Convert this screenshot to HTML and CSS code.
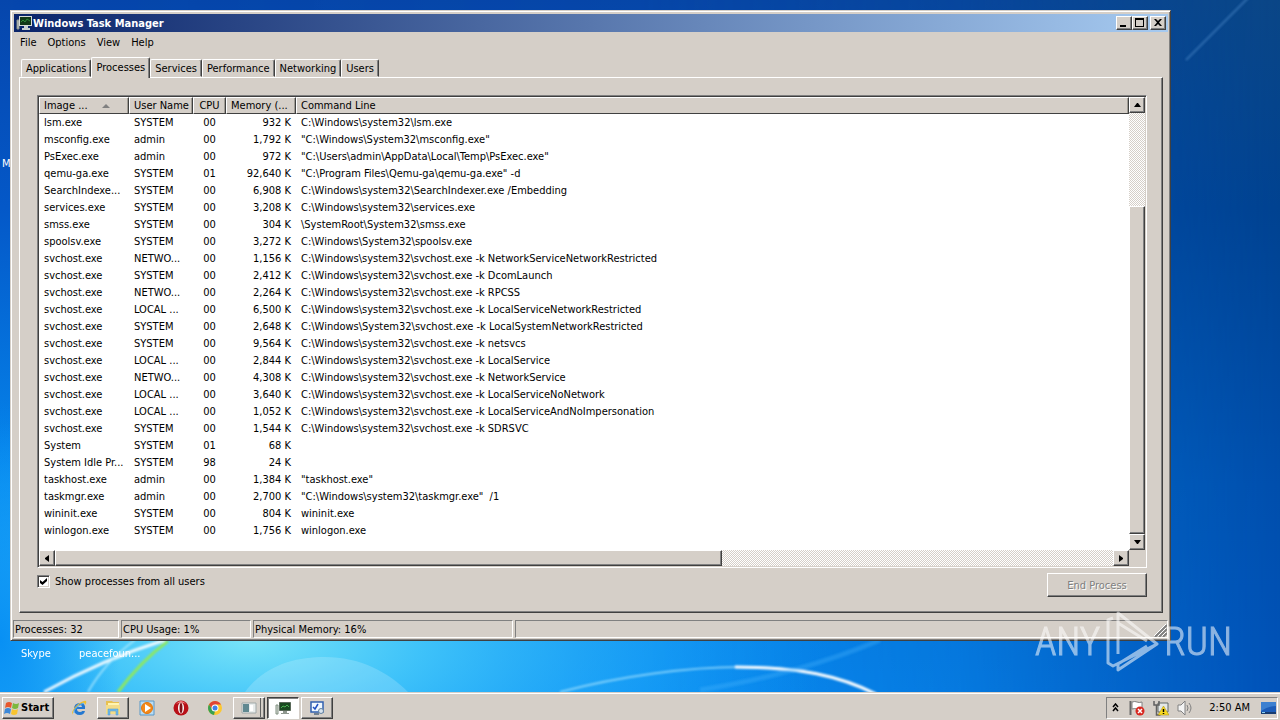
FILE: index.html
```html
<!DOCTYPE html>
<html lang="en">
<head>
    <meta charset="UTF-8">
    <meta name="viewport" content="width=device-width, initial-scale=1.0">
    <title>Windows Task Manager</title>
    <link rel="stylesheet" href="styles.css">
</head>
<body>
    <main class="desktop">
        <svg class="wallpaper" viewBox="0 0 1280 692" preserveAspectRatio="none" aria-hidden="true">
            <defs>
                <linearGradient id="sky" x1="0" y1="0" x2="0" y2="1">
                    <stop offset="0" stop-color="#0646ac"/>
                    <stop offset="0.3" stop-color="#0458c8"/>
                    <stop offset="0.7" stop-color="#0588ee"/>
                    <stop offset="1" stop-color="#0a94fa"/>
                </linearGradient>
                <linearGradient id="right" x1="0" y1="0" x2="0" y2="1">
                    <stop offset="0" stop-color="#0a4686"/>
                    <stop offset="0.3" stop-color="#004290"/>
                    <stop offset="0.7" stop-color="#004eac"/>
                    <stop offset="1" stop-color="#0052b8"/>
                </linearGradient>
                <linearGradient id="fade" x1="0" y1="0" x2="1" y2="0">
                    <stop offset="0" stop-color="#fff" stop-opacity="0"/>
                    <stop offset="0.5" stop-color="#fff" stop-opacity="0.1"/>
                    <stop offset="0.75" stop-color="#fff" stop-opacity="0.4"/>
                    <stop offset="0.91" stop-color="#fff" stop-opacity="0.8"/>
                    <stop offset="1" stop-color="#fff"/>
                </linearGradient>
                <mask id="rightmask"><rect width="1280" height="692" fill="url(#fade)"/></mask>
                <radialGradient id="glow" gradientUnits="userSpaceOnUse" cx="0" cy="0" r="1" gradientTransform="translate(250 640) scale(580 240)">
                    <stop offset="0" stop-color="#78e4f8"/>
                    <stop offset="0.3" stop-color="#44c8fa" stop-opacity="0.9"/>
                    <stop offset="1" stop-color="#18a4fa" stop-opacity="0"/>
                </radialGradient>
                <radialGradient id="edge" gradientUnits="userSpaceOnUse" cx="0" cy="0" r="1" gradientTransform="translate(0 640) scale(120 240)">
                    <stop offset="0" stop-color="#0890f4"/>
                    <stop offset="1" stop-color="#0890f4" stop-opacity="0"/>
                </radialGradient>
                <filter id="soft"><feGaussianBlur stdDeviation="1"/></filter>
            </defs>
            <rect width="1280" height="692" fill="url(#sky)"/>
            <rect width="1280" height="692" fill="url(#right)" mask="url(#rightmask)"/>
            <rect width="1280" height="692" fill="url(#glow)"/>
            <rect width="1280" height="692" fill="url(#edge)"/>
            <path d="M245 692C265 665 295 657 325 657C360 657 388 672 408 692Z" fill="#fff" opacity="0.18"/>
            <g fill="none" filter="url(#soft)">
                <path d="M44 692C80 672 120 654 165 640" stroke="#fff" stroke-width="3" opacity="0.9"/>
                <path d="M88 692Q105 662 135 640" stroke="#b8eeff" stroke-width="2" opacity="0.7"/>
                <path d="M118 692Q140 662 168 641" stroke="#8ee860" stroke-width="3"/>
                <path d="M560 692C620 676 690 667 740 667C800 667 840 676 874 694" stroke="#a8e4ff" stroke-width="2" opacity="0.7"/>
                <path d="M735 667C800 667 840 676 876 694" stroke="#fff" stroke-width="3"/>
                <path d="M700 690Q800 674 880 640" stroke="#50b8ff" stroke-width="5" opacity="0.3"/>
                <path d="M1186 60L1250 -4" stroke="#4a86c4" stroke-width="2" opacity="0.6"/>
            </g>
        </svg>

        <span class="desk-label label-m">M</span>
        <span class="desk-label label-skype">Skype</span>
        <span class="desk-label label-peace">peacefoun...</span>

        <section class="window">
            <header class="titlebar">
                <svg class="title-icon" viewBox="0 0 16 16" aria-hidden="true">
                    <path d="M1 5h2v9H1z" fill="#c8ccc8" stroke="#889088" stroke-width="1"/>
                    <rect x="3.500" y="1.500" width="12" height="9" fill="#123818" stroke="#d8dcd8"/>
                    <path d="M5 7l2-2 2 2 2-3 3 2" fill="none" stroke="#2c8838"/>
                    <path d="M8 11h4v2h2v2H6v-2h2z" fill="#c8d0d0"/>
                </svg>
                <h1>Windows Task Manager</h1>
                <div class="title-buttons">
                    <button type="button" class="raised" aria-label="Minimize"><svg viewBox="0 0 12 10"><path d="M2 7h6v2H2z"/></svg></button>
                    <button type="button" class="raised" aria-label="Maximize"><svg viewBox="0 0 12 10"><path d="M1 0h9v9H1zM2 2v6h7V2z" fill-rule="evenodd"/></svg></button>
                    <button type="button" class="raised close" aria-label="Close"><svg viewBox="0 0 12 10"><path d="M2 1h2l2 2 2-2h2L7 4.500 10 8H8L6 6 4 8H2l3-3.500z"/></svg></button>
                </div>
            </header>

            <nav class="menu">
                <button type="button">File</button>
                <button type="button">Options</button>
                <button type="button">View</button>
                <button type="button">Help</button>
            </nav>

            <div class="content">
                <div class="tabs" role="tablist">
                    <button type="button" role="tab">Applications</button>
                    <button type="button" role="tab" class="active" aria-selected="true">Processes</button>
                    <button type="button" role="tab">Services</button>
                    <button type="button" role="tab">Performance</button>
                    <button type="button" role="tab">Networking</button>
                    <button type="button" role="tab">Users</button>
                </div>

                <div class="panel">
                    <div class="list">
                        <div class="list-view">
                            <table>
                                <colgroup>
                                    <col class="col-name">
                                    <col class="col-user">
                                    <col class="col-cpu">
                                    <col class="col-mem">
                                    <col>
                                </colgroup>
                                <thead>
                                    <tr><th>Image ...<span class="sort"></span></th><th>User Name</th><th class="cpu">CPU</th><th>Memory (...</th><th>Command Line</th></tr>
                                </thead>
                                <tbody>
                                    <tr><td>lsm.exe</td><td>SYSTEM</td><td>00</td><td>932 K</td><td>C:\Windows\system32\lsm.exe</td></tr>
                                    <tr><td>msconfig.exe</td><td>admin</td><td>00</td><td>1,792 K</td><td>"C:\Windows\System32\msconfig.exe"</td></tr>
                                    <tr><td>PsExec.exe</td><td>admin</td><td>00</td><td>972 K</td><td>"C:\Users\admin\AppData\Local\Temp\PsExec.exe"</td></tr>
                                    <tr><td>qemu-ga.exe</td><td>SYSTEM</td><td>01</td><td>92,640 K</td><td>"C:\Program Files\Qemu-ga\qemu-ga.exe" -d</td></tr>
                                    <tr><td>SearchIndexe...</td><td>SYSTEM</td><td>00</td><td>6,908 K</td><td>C:\Windows\system32\SearchIndexer.exe /Embedding</td></tr>
                                    <tr><td>services.exe</td><td>SYSTEM</td><td>00</td><td>3,208 K</td><td>C:\Windows\system32\services.exe</td></tr>
                                    <tr><td>smss.exe</td><td>SYSTEM</td><td>00</td><td>304 K</td><td>\SystemRoot\System32\smss.exe</td></tr>
                                    <tr><td>spoolsv.exe</td><td>SYSTEM</td><td>00</td><td>3,272 K</td><td>C:\Windows\System32\spoolsv.exe</td></tr>
                                    <tr><td>svchost.exe</td><td>NETWO...</td><td>00</td><td>1,156 K</td><td>C:\Windows\system32\svchost.exe -k NetworkServiceNetworkRestricted</td></tr>
                                    <tr><td>svchost.exe</td><td>SYSTEM</td><td>00</td><td>2,412 K</td><td>C:\Windows\system32\svchost.exe -k DcomLaunch</td></tr>
                                    <tr><td>svchost.exe</td><td>NETWO...</td><td>00</td><td>2,264 K</td><td>C:\Windows\system32\svchost.exe -k RPCSS</td></tr>
                                    <tr><td>svchost.exe</td><td>LOCAL ...</td><td>00</td><td>6,500 K</td><td>C:\Windows\system32\svchost.exe -k LocalServiceNetworkRestricted</td></tr>
                                    <tr><td>svchost.exe</td><td>SYSTEM</td><td>00</td><td>2,648 K</td><td>C:\Windows\System32\svchost.exe -k LocalSystemNetworkRestricted</td></tr>
                                    <tr><td>svchost.exe</td><td>SYSTEM</td><td>00</td><td>9,564 K</td><td>C:\Windows\system32\svchost.exe -k netsvcs</td></tr>
                                    <tr><td>svchost.exe</td><td>LOCAL ...</td><td>00</td><td>2,844 K</td><td>C:\Windows\system32\svchost.exe -k LocalService</td></tr>
                                    <tr><td>svchost.exe</td><td>NETWO...</td><td>00</td><td>4,308 K</td><td>C:\Windows\system32\svchost.exe -k NetworkService</td></tr>
                                    <tr><td>svchost.exe</td><td>LOCAL ...</td><td>00</td><td>3,640 K</td><td>C:\Windows\system32\svchost.exe -k LocalServiceNoNetwork</td></tr>
                                    <tr><td>svchost.exe</td><td>LOCAL ...</td><td>00</td><td>1,052 K</td><td>C:\Windows\system32\svchost.exe -k LocalServiceAndNoImpersonation</td></tr>
                                    <tr><td>svchost.exe</td><td>SYSTEM</td><td>00</td><td>1,544 K</td><td>C:\Windows\system32\svchost.exe -k SDRSVC</td></tr>
                                    <tr><td>System</td><td>SYSTEM</td><td>01</td><td>68 K</td><td></td></tr>
                                    <tr><td>System Idle Pr...</td><td>SYSTEM</td><td>98</td><td>24 K</td><td></td></tr>
                                    <tr><td>taskhost.exe</td><td>admin</td><td>00</td><td>1,384 K</td><td>"taskhost.exe"</td></tr>
                                    <tr><td>taskmgr.exe</td><td>admin</td><td>00</td><td>2,700 K</td><td>"C:\Windows\system32\taskmgr.exe"&nbsp; /1</td></tr>
                                    <tr><td>wininit.exe</td><td>SYSTEM</td><td>00</td><td>804 K</td><td>wininit.exe</td></tr>
                                    <tr><td>winlogon.exe</td><td>SYSTEM</td><td>00</td><td>1,756 K</td><td>winlogon.exe</td></tr>
                                </tbody>
                            </table>
                        </div>
                        <div class="scroll vertical">
                            <button type="button" class="raised" aria-label="Scroll up"><svg viewBox="0 0 7 4"><path d="M3 0h1l3 4H0z"/></svg></button>
                            <div class="track"><div class="thumb raised"></div></div>
                            <button type="button" class="raised" aria-label="Scroll down"><svg viewBox="0 0 7 4"><path d="M0 0h7L4 4H3z"/></svg></button>
                        </div>
                        <div class="scroll horizontal">
                            <button type="button" class="raised" aria-label="Scroll left"><svg viewBox="0 0 4 7"><path d="M4 0v7L0 4V3z"/></svg></button>
                            <div class="track"><div class="thumb raised"></div></div>
                            <button type="button" class="raised" aria-label="Scroll right"><svg viewBox="0 0 4 7"><path d="M0 0v7l4-3V3z"/></svg></button>
                        </div>
                    </div>
                    <div class="panel-foot">
                        <label><input type="checkbox" checked> Show processes from all users</label>
                        <button type="button" class="end raised" disabled>End Process</button>
                    </div>
                </div>
            </div>

            <footer class="status">
                <span class="st-proc">Processes: 32</span>
                <span class="st-cpu">CPU Usage: 1%</span>
                <span class="st-mem">Physical Memory: 16%</span>
                <span class="st-rest"><svg class="grip" viewBox="0 0 13 13" aria-hidden="true"><path d="M1 13L13 1M5 13l8-8M9 13l4-4" stroke="#808080" stroke-width="2"/><path d="M0 12L12 0M4 12l8-8M8 12l4-4" stroke="#fff"/></svg></span>
            </footer>
        </section>

        <div class="watermark">
            <span>ANY</span>
            <svg viewBox="0 0 56 64" aria-hidden="true">
                <path d="M9 8L4 10V53L9 56L53 34M14 44V3L53 34L14 60V54L43 36M14 13L43 31" fill="none" stroke="#fff" stroke-width="3" stroke-linejoin="round"/>
            </svg>
            <span>RUN</span>
        </div>
    </main>

    <footer class="taskbar">
        <button type="button" class="start raised">
            <svg viewBox="0 0 16 16" aria-hidden="true">
                <path d="M2 3q3-2 6 0L7 8Q4 6 1 8z" fill="#e8582c"/>
                <path d="M9 3q3 2 6 0l-1 5q-3 2-6 0z" fill="#7cb83c"/>
                <path d="M1 9q3-2 6 0l-1 5q-3-2-6 0z" fill="#3c88d8"/>
                <path d="M8 9q3 2 6 0l-1 5q-3 2-6 0z" fill="#f8c430"/>
            </svg>
            Start
        </button>
        <div class="tasks">
            <button type="button" aria-label="Internet Explorer">
                <svg viewBox="0 0 16 16"><path d="M14 9H6q0 3 3 3 2 0 2-1h3q-1 4-5 4-6 0-6-6 0-6 6-6 6 0 5 6zM6 7h5q0-2-2-2-3 0-3 2z" fill="#2478d0" fill-rule="evenodd"/><path d="M2 15Q-1 12 6 5 13 0 15 1q1 2-1 4 0-3-3-2-5 2-8 7-2 4-1 5z" fill="#f0c030"/><path d="M3 13Q2 11 6 7 10 4 13 3" fill="none" stroke="#58b0f0"/></svg>
            </button>
            <button type="button" class="raised" aria-label="Explorer">
                <svg viewBox="0 0 16 16"><path d="M1 3V1h6l1 1h6v12H1z" fill="#e8c050"/><path d="M3 3h11v9H3z" fill="#fff4b0"/><path d="M1 5h14v9H1z" fill="#f4dc88"/><path d="M3 15V9h10v6h-2v-4H5v4z" fill="#70b8e8" stroke="#4898d0" stroke-width="0.500"/></svg>
            </button>
            <button type="button" aria-label="Media Player">
                <svg viewBox="0 0 16 16"><path d="M1 1h14v14H1z" fill="#b8dcf4" stroke="#5898c8"/><circle cx="8" cy="8" r="5.500" fill="#f48818" stroke="#e07810"/><path d="M6 4l6 4-6 4z" fill="#fff"/></svg>
            </button>
            <button type="button" aria-label="Opera">
                <svg viewBox="0 0 16 16"><circle cx="8" cy="8" r="7.500" fill="#b81018"/><path d="M3 4Q8-2 13 4 8 1 3 4z" fill="#f08080"/><ellipse cx="8" cy="8" rx="3" ry="5.500" fill="#fff"/><ellipse cx="8" cy="8" rx="1.500" ry="5" fill="#801018"/></svg>
            </button>
            <button type="button" aria-label="Chrome">
                <svg viewBox="0 0 16 16"><circle cx="8" cy="8" r="7" fill="#fcc830"/><path d="M2 4.500A7 7 0 0 1 14 4.500H8L5 9z" fill="#e04434"/><path d="M2 4.500L5 9l3 2-1 4A7 7 0 0 1 2 4.500z" fill="#38a050"/><circle cx="8" cy="8" r="3.500" fill="#fff"/><circle cx="8" cy="8" r="2.500" fill="#4080e8"/></svg>
            </button>
            <button type="button" class="raised stacked" aria-label="Program">
                <svg viewBox="0 0 16 16"><path d="M1 3h14v10H1z" fill="#e8ecec" stroke="#a0a8a8"/><path d="M2 4h6v8H2z" fill="#608890"/><path d="M9 5h3v6H9z" fill="#fff"/></svg>
            </button>
            <button type="button" class="pressed" aria-label="Windows Task Manager">
                <svg viewBox="0 0 16 16"><path d="M1 5h2v9H1z" fill="#d8dcd8" stroke="#809080"/><path d="M4.500 2.500h11v8h-11z" fill="#184820" stroke="#586858"/><path d="M6 8l2-2 2 1 2-2 2 2" fill="none" stroke="#48b050"/><path d="M8 11h4v2h2v1H6v-1h2z" fill="#909890"/></svg>
            </button>
            <button type="button" class="raised" aria-label="System Configuration">
                <svg viewBox="0 0 16 16"><path d="M2 2h12v10H2z" fill="#f0f8ff" stroke="#3060b0" stroke-width="1.500"/><path d="M4 7l2 2 3-5" fill="none" stroke="#2050c0" stroke-width="1.500"/><path d="M5 14h5" stroke="#708090" stroke-width="2"/><circle cx="12" cy="11" r="2.500" fill="#d8e4f0" stroke="#6080a0"/></svg>
            </button>
        </div>
        <div class="tray">
            <svg class="chevron" viewBox="0 0 7 9" aria-hidden="true"><path d="M1 4l2.500-3L6 4M1 8l2.500-3L6 8" fill="none" stroke="#000" stroke-width="1.500"/></svg>
            <svg viewBox="0 0 16 16" aria-hidden="true"><path d="M1.500 1v14" stroke="#686868" stroke-width="2"/><path d="M3 2q3-1 5 0t5 0v7q-3 1-5 0T3 9z" fill="#fff" stroke="#808080"/><circle cx="11" cy="11" r="4.500" fill="#d82820"/><path d="M9 9l4 4m0-4l-4 4" stroke="#fff" stroke-width="1.500"/></svg>
            <svg viewBox="0 0 16 16" aria-hidden="true"><path d="M5 3h10v9H5z" fill="#e4e8e8" stroke="#606868"/><path d="M1 1v4h5V1M3.500 5v10h4" fill="none" stroke="#606060" stroke-width="1.500"/><path d="M10.500 6L16 15H5z" fill="#f8d820" stroke="#a08810" stroke-width="0.500"/><path d="M10.500 9v3m0 1v1" stroke="#000" stroke-width="1.500"/></svg>
            <svg viewBox="0 0 16 16" aria-hidden="true"><path d="M1 5h3l4-4v14l-4-4H1z" fill="#f4f4f4" stroke="#808080"/><path d="M10 5q2 3 0 6M12 3q4 5 0 10" fill="none" stroke="#808080"/></svg>
            <time>2:50 AM</time>
            <button type="button" class="show-desktop" aria-label="Show desktop"><svg viewBox="0 0 16 16"><path d="M1 2h15v10H1z" fill="#1c5cb8"/><path d="M1 2h15v4Q8 6 1 11z" fill="#3c80d0"/><path d="M1 12h15v2H1z" fill="#183c70"/><path d="M2 12h3v1H2z" fill="#8cd0f0"/></svg></button>
        </div>
    </footer>
</body>
</html>
```
FILE: styles.css
```css
* {
    box-sizing: border-box;
}
body {
    margin: 0;
    height: 100vh;
    display: flex;
    flex-direction: column;
    overflow: hidden;
    font-family: "DejaVu Sans Condensed", "Liberation Sans", sans-serif;
    font-size: 11px;
    line-height: 13px;
    color: #000;
    background: #d5cfc8;
}
button {
    font: inherit;
    color: inherit;
    background: none;
    border: none;
    padding: 0;
    margin: 0;
}
svg {
    display: block;
}
.raised {
    background: #d5cfc8;
    border: 1px solid;
    border-color: #fff #404040 #404040 #fff;
    box-shadow: inset -1px -1px #808080;
}

/* Desktop */
.desktop {
    flex: 1;
    position: relative;
    overflow: hidden;
}
.wallpaper {
    position: absolute;
    inset: 0;
    width: 100%;
    height: 100%;
}
.desk-label {
    position: absolute;
    color: #fff;
}
.label-m {
    left: 2px;
    top: 157px;
}
.label-skype {
    left: 21px;
    bottom: 32px;
}
.label-peace {
    left: 79px;
    bottom: 32px;
}

/* Window */
.window {
    position: absolute;
    top: 10px;
    left: 10px;
    right: 109px;
    bottom: 51px;
    display: flex;
    flex-direction: column;
    padding: 2px;
    background: #d5cfc8;
    border: 1px solid;
    border-color: #d5cfc8 #404040 #404040 #d5cfc8;
    box-shadow: inset 1px 1px #fff, inset -1px -1px #808080;
}
.titlebar {
    display: flex;
    align-items: center;
    height: 18px;
    margin: 1px 0 0 1px;
    padding: 0 2px;
    gap: 1px;
    color: #fff;
    background: linear-gradient(90deg, #0a246a, #a6caf0);
}
.titlebar h1 {
    flex: 1;
    margin: 0;
    font-size: 11px;
    font-weight: bold;
}
.title-icon {
    width: 16px;
    height: 16px;
}
.title-buttons {
    display: flex;
}
.title-buttons button {
    width: 16px;
    height: 14px;
    padding: 1px;
}
.title-buttons .close {
    margin-left: 2px;
}
.title-buttons svg {
    width: 12px;
    height: 10px;
}
.menu {
    display: flex;
    gap: 11px;
    height: 20px;
    padding: 0 7px;
    align-items: center;
}
.content {
    flex: 1;
    display: flex;
    flex-direction: column;
    min-height: 0;
    padding: 5px 5px 7px 6px;
}
.tabs {
    display: flex;
    align-items: flex-end;
    height: 20px;
    padding-left: 2px;
}
.tabs button {
    height: 18px;
    padding: 1px 4px 0;
    border: 1px solid;
    border-color: #fff #404040 transparent #fff;
    border-radius: 2px 2px 0 0;
    box-shadow: inset -1px 0 #808080;
}
.tabs .active {
    position: relative;
    z-index: 1;
    height: 21px;
    margin-bottom: -1px;
    padding-bottom: 3px;
    background: #d5cfc8;
    border-bottom: none;
}
.panel {
    flex: 1;
    display: flex;
    flex-direction: column;
    min-height: 0;
    padding: 17px 15px 15px 17px;
    border: 1px solid;
    border-color: #fff #404040 #404040 #fff;
    box-shadow: inset -1px -1px #808080;
}

/* Process list */
.list {
    flex: 1;
    min-height: 0;
    display: grid;
    grid-template-columns: 1fr 16px;
    grid-template-rows: 1fr 16px;
    border: 1px solid;
    border-color: #808080 #fff #fff #808080;
    padding: 1px;
    background: #d5cfc8;
    box-shadow: inset 1px 1px #404040;
}
.list-view {
    overflow: hidden;
    background: #fff;
}
table {
    width: 100%;
    table-layout: fixed;
    border-collapse: separate;
    border-spacing: 0;
}
.col-name {
    width: 90px;
}
.col-user {
    width: 64px;
}
.col-cpu {
    width: 33px;
}
.col-mem {
    width: 70px;
}
th,
td {
    height: 17px;
    padding: 0 5px;
    font-weight: normal;
    text-align: left;
    white-space: nowrap;
    overflow: hidden;
}
th {
    background: #d5cfc8;
    border: 1px solid;
    border-color: #fff #404040 #404040 #fff;
    box-shadow: inset -1px 0 #a09c94;
    padding: 0 4px;
}
.sort {
    display: inline-block;
    margin-left: 14px;
    border: 4px solid transparent;
    border-top: none;
    border-bottom-color: #808080;
    vertical-align: middle;
}
td:nth-child(3),
.cpu {
    text-align: center;
}
td:nth-child(4) {
    text-align: right;
}

/* Scroll bars */
.scroll {
    display: flex;
}
.scroll button {
    flex: none;
    width: 16px;
    height: 16px;
    display: flex;
    align-items: center;
    justify-content: center;
}
.vertical {
    flex-direction: column;
}
.vertical svg {
    width: 7px;
    height: 4px;
}
.horizontal svg {
    width: 4px;
    height: 7px;
}
.track {
    flex: 1;
    display: flex;
    background: repeating-conic-gradient(#fff 0 25%, #d5cfc8 0 50%) 0 0 / 2px 2px;
}
.vertical .track {
    flex-direction: column;
    justify-content: flex-end;
}
.vertical .thumb {
    height: 78%;
}
.horizontal .thumb {
    width: 63%;
}
.panel-foot {
    display: flex;
    justify-content: space-between;
    align-items: flex-start;
    padding-top: 5px;
}
.panel-foot label {
    display: flex;
    align-items: center;
    gap: 5px;
    padding-top: 2px;
}
.panel-foot input {
    appearance: none;
    width: 13px;
    height: 13px;
    margin: 0;
    display: grid;
    place-items: center;
    background: #fff;
    border: 1px solid;
    border-color: #808080 #fff #fff #808080;
    box-shadow: inset 1px 1px #404040, inset -1px -1px #d5cfc8;
}
.panel-foot input:checked::before {
    content: "";
    width: 7px;
    height: 7px;
    background: #000;
    clip-path: polygon(0 28%, 36% 58%, 100% 0, 100% 42%, 36% 100%, 0 70%);
}
.end {
    width: 100px;
    height: 24px;
    color: #808080;
    text-shadow: 1px 1px #fff;
}

/* Status bar */
.status {
    display: flex;
    gap: 2px;
    height: 18px;
}
.status span {
    padding: 2px 1px;
    border: 1px solid;
    border-color: #808080 #fff #fff #808080;
}
.st-proc {
    width: 106px;
}
.st-cpu {
    width: 130px;
}
.st-mem {
    width: 260px;
}
.status .st-rest {
    flex: 1;
    display: flex;
    justify-content: flex-end;
    padding: 3px 0 0;
}
.grip {
    width: 13px;
    height: 13px;
}

/* Watermark */
.watermark {
    position: absolute;
    right: 48px;
    bottom: 18px;
    display: flex;
    align-items: center;
    color: #fff;
    opacity: 0.55;
    font-family: "Roboto Condensed", "Open Sans Condensed", "Liberation Sans Narrow", sans-serif;
    font-weight: 300;
    font-size: 39px;
    line-height: 64px;
    -webkit-text-stroke: 1px #fff;
}
.watermark svg {
    width: 56px;
    height: 64px;
    margin: 0 4px;
}

/* Taskbar */
.taskbar {
    height: 28px;
    display: flex;
    align-items: center;
    padding: 2px 2px 0;
    background: #d5cfc8;
    border-top: 1px solid #d5cfc8;
    box-shadow: inset 0 1px #fff;
}
.start {
    display: flex;
    align-items: center;
    gap: 1px;
    width: 52px;
    height: 22px;
    padding: 0 1px;
    font-weight: bold;
}
.taskbar svg {
    width: 16px;
    height: 16px;
}
.tasks {
    flex: 1;
    display: flex;
    gap: 2px;
    padding-left: 9px;
}
.tasks button {
    width: 32px;
    height: 22px;
    display: flex;
    align-items: center;
    justify-content: center;
}
.tasks .stacked {
    box-shadow: inset -1px -1px #808080, inset -3px 0 #d5cfc8, inset -4px 0 #606060;
}
.tasks .pressed {
    background: #fff;
    border: 1px solid;
    border-color: #404040 #fff #fff #404040;
    box-shadow: inset 1px 1px #808080;
}
.tray {
    display: flex;
    align-items: center;
    gap: 8px;
    height: 22px;
    padding: 0 1px 0 5px;
    border: 1px solid;
    border-color: #808080 #fff #fff #808080;
}
.taskbar .chevron {
    width: 7px;
    height: 9px;
    margin-right: 2px;
}
.tray time {
    margin: 0 2px 0 8px;
}
```
